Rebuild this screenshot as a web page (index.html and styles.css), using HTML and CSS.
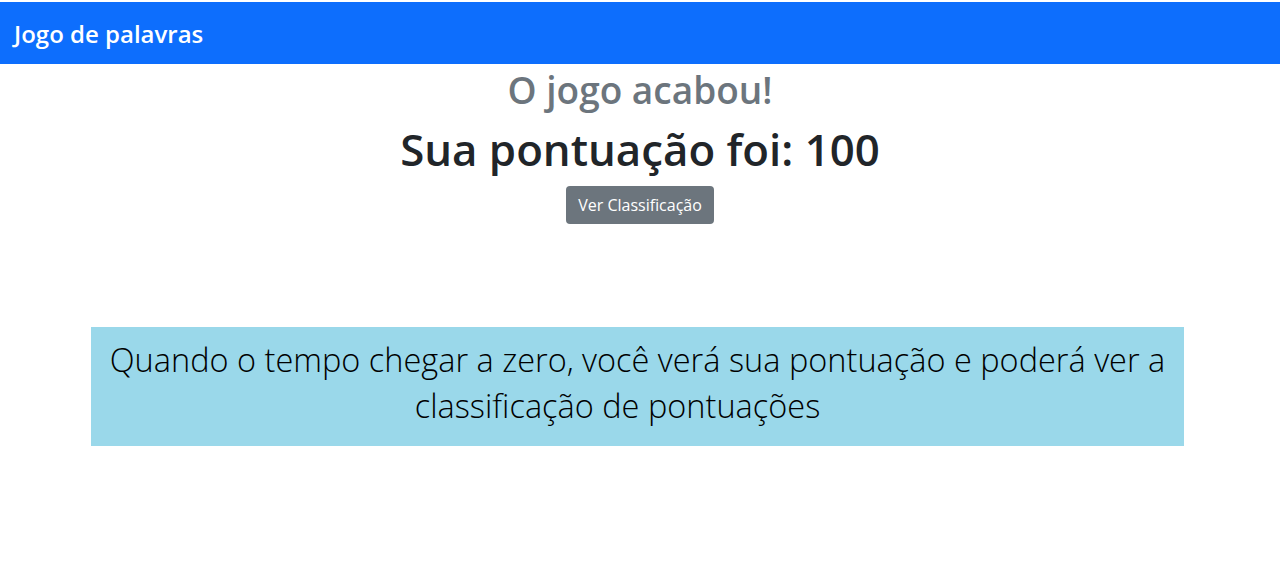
FILE: index.html
```html
<!DOCTYPE html>
<html lang="pt">
<head>
<meta charset="utf-8">
<title>Jogo de palavras</title>
<link rel="stylesheet" href="styles.css">
</head>
<body>
<nav class="navbar"><span class="brand">Jogo de palavras</span></nav>
<main class="content">
  <h2 class="over">O jogo acabou!</h2>
  <h1 class="score">Sua pontuação foi: 100</h1>
  <button class="btn">Ver Classificação</button>
  <div class="info">Quando o tempo chegar a zero, você verá sua pontuação e poderá ver a classificação de pontuações<span class="tail"></span></div>
</main>
</body>
</html>
```
FILE: styles.css
```css
html, body { margin: 0; padding: 0; background: #fff; }
body { font-family: "Open Sans", "Noto Sans", sans-serif; color: #212529; padding-top: 2px; }
.navbar { background: #0d6efd; height: 62px; display: flex; align-items: center; padding: 0 14px; }
.brand { color: #fff; font-size: 24px; font-weight: 600; }
.content { display: flex; flex-direction: column; align-items: center; }
.over { margin: 3px 0 0; font-size: 37px; font-weight: 600; color: #6c757d; line-height: 46px; }
.score { margin: 9px 0 0; font-size: 43.8px; font-weight: 600; line-height: 54px; color: #212529; }
.btn { margin-top: 10px; background: #6c757d; color: #fff; border: 0; border-radius: 4px; height: 38px; padding: 0 12px; font-family: inherit; font-size: 16px; }
.info { margin: 103px 0 0 -5px; width: 1093px; box-sizing: border-box; background: #9ad8ea; color: #000; text-align: center; font-size: 32.5px; font-weight: 300; line-height: 46px; padding: 10px 16px 17px; }
.tail { display: inline-block; width: 40px; }
```
